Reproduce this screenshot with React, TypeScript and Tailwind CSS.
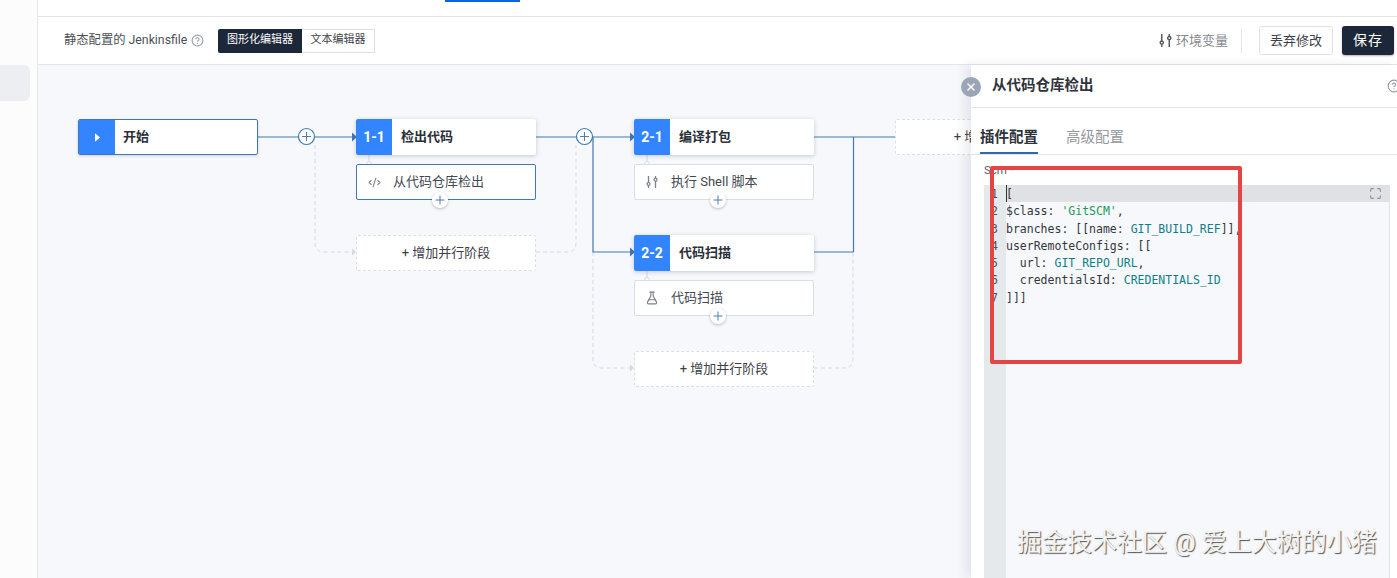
import React from 'react';
import { CircleHelp, CodeXml, FlaskConical, X, Maximize } from 'lucide-react';

const cjk = "font-['Roboto','Noto_Sans_CJK_SC',sans-serif]";

const SlidersIcon: React.FC<{ className?: string }> = ({ className }) => (
  <svg viewBox="0 0 14 14" fill="none" stroke="currentColor" strokeWidth="1.3" className={className}>
    <path d="M3.5 1v6.4M3.5 10.4V13M10.500 1v2.200M10.500 6.200V13" />
    <circle cx="3.5" cy="8.900" r="1.500" />
    <circle cx="10.500" cy="4.700" r="1.500" />
  </svg>
);

const Plus: React.FC<{ className: string }> = ({ className }) => (
  <div className={`absolute flex h-4 w-4 items-center justify-center rounded-full bg-white text-[15px] font-light leading-none text-[#4a7fb5] shadow-[0_1px_3px_rgba(0,0,0,0.25)] ${className}`}>
    <svg viewBox="0 0 10 10" className="h-2.5 w-2.5" stroke="currentColor" strokeWidth="1"><path d="M5 0.500v9M0.500 5h9" /></svg>
  </div>
);

const Stage: React.FC<{ no: string; title: string; className: string }> = ({ no, title, className }) => (
  <div className={`absolute flex h-9 w-[180px] items-center overflow-hidden rounded-[2px] bg-white shadow-[0_1px_4px_rgba(40,60,90,0.25)] ${className}`}>
    <div className="flex h-full w-9 items-center justify-center bg-[#3385ff] text-[14px] font-bold text-white">{no}</div>
    <div className="pl-[9px] text-[13px] font-bold text-[#2a2f38]">{title}</div>
  </div>
);

const Step: React.FC<{ title: string; active?: boolean; icon: React.ReactNode; className: string; plus: string }> = ({ title, active, icon, className, plus }) => (
  <div className={`absolute flex h-9 w-[180px] items-center rounded-[2px] border bg-white ${active ? 'border-[#3f78b5]' : 'border-[#d8dde6]'} ${className}`}>
    <div className="flex w-9 justify-center pr-[2px] text-[#7d8288]">{icon}</div>
    <div className="text-[13px] text-[#44484f]">{title}</div>
    <Plus className={plus} />
  </div>
);

const AddBox: React.FC<{ label: string; className: string }> = ({ label, className }) => (
  <div className={`absolute flex h-9 w-[180px] items-center justify-center rounded-[2px] border border-dashed border-[#dcdfe6] bg-white text-[13px] text-[#3c4047] ${className}`}>
    {label}
  </div>
);

const Lines: React.FC = () => (
  <svg viewBox="38 65 1359 513" width="1359" height="513" fill="none" className="absolute left-0 top-0">
    <g stroke="#d4d9e2" strokeDasharray="4 3">
      <path d="M315 145V243Q315 252 324 252H352" />
      <path d="M536 252H567Q576 252 576 243V145" />
      <path d="M593 252V359Q593 368 602 368H630" />
      <path d="M814 368H844Q853 368 853 359V252" />
    </g>
    <path d="M352 248.500L356 252L352 255.500Z M630 364.500L634 368L630 371.500Z" fill="#d4d9e2" />
    <g stroke="#3f78b5" strokeWidth="1.200">
      <path d="M258 137H298M315 137H353" />
      <path d="M536 137H576M593 137H631" />
      <path d="M593 137V252H631" />
      <path d="M814 137H895M814 252H853.500M853.500 137V252" />
    </g>
    <path d="M352 132.500L357 137L352 141.500Z M630 132.500L635 137L630 141.500Z M630 247.500L635 252L630 256.500Z" fill="#3f78b5" />
    <g fill="#fff" stroke="#3f78b5" strokeWidth="1.200">
      <circle cx="306.500" cy="136.500" r="8" />
      <circle cx="584.500" cy="136.500" r="8" />
    </g>
    <path d="M302 136.500h9M306.500 132v9M580 136.500h9M584.500 132v9" stroke="#4a7fb5" />
    <g stroke="#d4d9e2" fill="#fff">
      <path d="M369 155V161M647 155V161M647 271V277" />
      <circle cx="369" cy="164" r="2.500" />
      <circle cx="647" cy="164" r="2.500" />
      <circle cx="647" cy="280" r="2.500" />
    </g>
  </svg>
);

const code: React.ReactNode[] = [
  <>[</>,
  <>$class: <span className="text-[#1a9a5b]">'GitSCM'</span>,</>,
  <>branches: [[name: <span className="text-[#0f7f86]">GIT_BUILD_REF</span>]],</>,
  <>userRemoteConfigs: [[</>,
  <>&nbsp;&nbsp;url: <span className="text-[#0f7f86]">GIT_REPO_URL</span>,</>,
  <>&nbsp;&nbsp;credentialsId: <span className="text-[#0f7f86]">CREDENTIALS_ID</span></>,
  <>]]]</>,
];

const App: React.FC = () => (
  <div className={`flex h-[578px] w-[1397px] overflow-hidden bg-white ${cjk}`}>
    {/* sidebar */}
    <aside className="w-[38px] shrink-0 border-r border-[#e6e8ec] bg-[#fcfcfd] pt-[65px]">
      <div className="h-9 w-[30px] rounded-r-md bg-[#eceef1]" />
    </aside>

    <main className="relative flex min-w-0 flex-1 flex-col">
      <div className="relative h-[17px] shrink-0 border-b border-[#e3e5e9]">
        <div className="ml-[407px] h-[2px] w-[75px] bg-[#0b63e5]" />
      </div>

      <div className="flex h-[48px] shrink-0 items-center border-b border-[#e3e5e9] pl-[26px] pr-[3px]">
        <span className="w-[123px] whitespace-nowrap text-[12.300px] text-[#4b4f56]">静态配置的 Jenkinsfile</span>
        <CircleHelp size={13} className="ml-[4px] text-[#9a9ea5]" />
        <div className="ml-[14px] flex h-[24px] text-[11px]">
          <div className="flex w-[84px] items-center justify-center rounded-l-[2px] bg-[#1c2739] text-white">图形化编辑器</div>
          <div className="flex w-[73px] items-center justify-center border border-l-0 border-[#dcdfe4] text-[#3f4349]">文本编辑器</div>
        </div>
        <div className="ml-auto flex items-center">
          <SlidersIcon className="h-[15px] w-[15px] text-[#50555c]" />
          <span className="ml-[3px] text-[13px] text-[#85898f]">环境变量</span>
          <div className="ml-[13px] h-[24px] w-px bg-[#e3e5e9]" />
          <button className="ml-[17px] h-[29px] w-[74px] rounded-[3px] border border-[#dfe2e6] text-[13px] text-[#3c4047]">丢弃修改</button>
          <button className="ml-[9px] h-[29px] w-[52px] rounded-[3px] bg-[#1c2739] text-[14px] tracking-[1px] text-white shadow-[0_1px_2px_rgba(0,0,0,0.3)]">保存</button>
        </div>
      </div>

      {/* pipeline canvas */}
      <div className="relative min-h-0 flex-1 bg-[#f6f8fb]">
        <Lines />

        <div className="absolute left-[40px] top-[54px] flex h-9 w-[180px] items-center overflow-hidden rounded-[2px] border border-[#3f78b5] bg-white shadow-[0_1px_3px_rgba(40,60,90,0.2)]">
          <div className="flex h-full w-9 items-center justify-center bg-[#3385ff]">
            <svg viewBox="0 0 6 10" className="h-[9px] w-[5px]" fill="#fff"><path d="M0 0L6 5L0 10Z" /></svg>
          </div>
          <div className="pl-[8px] text-[13px] font-bold text-[#2a2f38]">开始</div>
        </div>

        <Stage no="1-1" title="检出代码" className="left-[318px] top-[54px]" />
        <Step title="从代码仓库检出" active icon={<CodeXml size={13} />} className="left-[318px] top-[99px]" plus="left-[75px] top-[27px]" />
        <AddBox label="+ 增加并行阶段" className="left-[318px] top-[170px]" />

        <Stage no="2-1" title="编译打包" className="left-[596px] top-[54px]" />
        <Step title="执行 Shell 脚本" icon={<SlidersIcon className="h-[14px] w-[14px]" />} className="left-[596px] top-[99px]" plus="left-[75px] top-[27px]" />
        <Stage no="2-2" title="代码扫描" className="left-[596px] top-[170px]" />
        <Step title="代码扫描" icon={<FlaskConical size={14} />} className="left-[596px] top-[215px]" plus="left-[75px] top-[27px]" />
        <AddBox label="+ 增加并行阶段" className="left-[596px] top-[286px]" />

        <AddBox label="+ 增加阶段" className="left-[857px] top-[54px]" />

        {/* side panel */}
        <section className="absolute bottom-0 left-[933px] right-0 top-0 flex flex-col bg-white shadow-[-6px_0_10px_rgba(60,70,90,0.10)]">
          <div className="flex h-[43px] shrink-0 items-center border-b border-[#e3e5e9] pl-[21px]">
            <span className="text-[14.500px] font-bold text-[#2f333a]">从代码仓库检出</span>
            <CircleHelp size={14} className="ml-auto mr-[-4px] text-[#9a9ea5]" />
          </div>
          <div className="absolute left-[-10px] top-[12px] flex h-5 w-5 items-center justify-center rounded-full bg-[#9ba5b8]">
            <X size={12} strokeWidth={3} className="text-white" />
          </div>
          <div className="flex h-[47px] shrink-0 items-end gap-[28px] border-b border-[#e3e5e9] pl-[9px] text-[14.500px] leading-[20px]">
            <div className="border-b-2 border-[#2a6cab] pb-[4px] font-bold text-[#2f333a]">插件配置</div>
            <div className="pb-[6px] text-[#94989e]">高级配置</div>
          </div>
          <div className="pl-[13px] pt-[6px] text-[11.500px] leading-[18px] text-[#5d6168]">Scm *</div>
          <div className="relative ml-[13px] mr-[7px] mt-[6px] flex min-h-0 flex-1 border-r border-[#dfe2e6] bg-[#f6f8fb]">
            <div className="w-[22px] shrink-0 bg-[#e6e9ec] pr-[8px] pt-[1px] text-right font-['DejaVu_Sans_Mono',monospace] text-[11.500px] leading-[17.300px] text-[#4c5057]">
              {code.map((_, i) => <div key={i}>{i + 1}</div>)}
            </div>
            <div className="relative min-w-0 flex-1 pt-[1px] font-['DejaVu_Sans_Mono',monospace] text-[11.500px] leading-[17.300px] text-[#33373d]">
              <div className="absolute left-0 right-0 top-0 h-[17px] bg-[#dfe1e4]" />
              <div className="absolute left-0 top-0 h-[17px] w-px bg-[#333]" />
              <div className="relative">
                {code.map((line, i) => <div key={i} className="whitespace-pre">{line}</div>)}
              </div>
              <Maximize size={13} className="absolute right-[7px] top-[2px] text-[#8d9198]" />
            </div>
          </div>
        </section>

        {/* annotation and watermark lie over the screenshot */}
        <div className="absolute left-[952px] top-[101px] h-[198px] w-[252px] rounded-[2px] border-[4px] border-[#e34545]" />
        <div className="absolute left-[979px] top-[461px] whitespace-nowrap text-[25px] leading-[34px] text-[#f2f2f2] [text-shadow:1px_1px_1px_#555]">
          掘金技术社区 @ 爱上大树的小猪
        </div>
      </div>
    </main>
  </div>
);

export default App;
